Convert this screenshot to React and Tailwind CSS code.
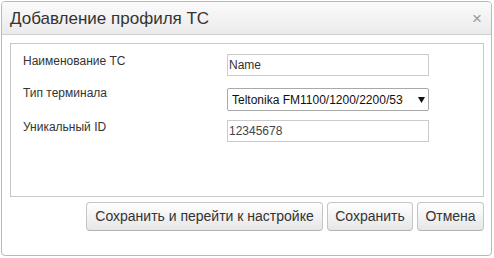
export default function App() {
  const font = { fontFamily: '"Liberation Sans", Arial, sans-serif' };
  const btn =
    "h-[29px] rounded-[4px] border border-[#c5c5c5] border-b-[#b3b3b3] bg-gradient-to-b from-[#ffffff] to-[#e6e6e6] text-[14px] text-[#333] flex items-center justify-center shadow-[inset_0_1px_0_rgba(255,255,255,0.3)]";
  return (
    <div className="w-[494px] h-[258px] bg-white pt-px pl-px" style={font}>
      <div className="w-[491px] h-[255px] border border-[#b9b9b9] rounded-[4px] flex flex-col bg-white overflow-hidden">
        <div className="h-[33px] shrink-0 border-b border-[#cfcfcf] bg-gradient-to-b from-[#fbfbfb] to-[#ebebeb] flex items-center justify-between pl-[8px] pr-[9px]">
          <span className="text-[17px] text-[#333] leading-none">Добавление профиля ТС</span>
          <span className="text-[17px] text-[#9a9a9a] leading-none">×</span>
        </div>
        <div className="pt-[8px] pl-[8px] flex flex-col">
          <div className="w-[474px] h-[154px] border border-[#c8c8c8] pl-[12px] pt-[10px] flex flex-col text-[12px] leading-[14px] text-[#333]">
            <div className="flex items-start h-[22px]">
              <div className="w-[204px]">Наименование ТС</div>
              <div className="w-[202px] h-[22px] border border-[#cbcbcb] flex items-center pl-[1px] text-[#333]">Name</div>
            </div>
            <div className="flex items-start h-[25px] mt-[10px]">
              <div className="w-[204px]">Тип терминала</div>
              <div className="mt-[2px] w-[202px] h-[23px] border border-[#a9a9a9] rounded-[2px] flex items-center pl-[4px] text-[#111]">
                <span className="w-[171px] overflow-hidden whitespace-nowrap">Teltonika FM1100/1200/2200/5300</span>
                <svg className="ml-[15px]" width="7" height="6" viewBox="0 0 7 6">
                  <polygon points="0,0 7,0 3.5,6" fill="#111" />
                </svg>
              </div>
            </div>
            <div className="flex items-start h-[22px] mt-[9px]">
              <div className="w-[204px]">Уникальный ID</div>
              <div className="w-[202px] h-[22px] border border-[#cbcbcb] flex items-center pl-[1px] text-[#444]">12345678</div>
            </div>
          </div>
          <div className="w-[474px] flex justify-end gap-[4px] mt-[5px]">
            <button className={btn + " w-[237px]"} style={font}>Сохранить и перейти к настройке</button>
            <button className={btn + " w-[86px]"} style={font}>Сохранить</button>
            <button className={btn + " w-[67px]"} style={font}>Отмена</button>
          </div>
        </div>
      </div>
    </div>
  );
}
